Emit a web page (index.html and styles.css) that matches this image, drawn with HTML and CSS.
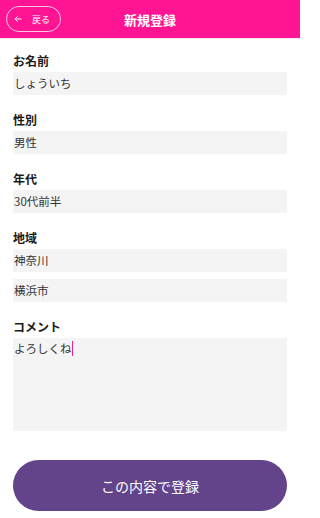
FILE: index.html
```html
<!DOCTYPE html>
<html lang="ja">
<head>
<meta charset="utf-8">
<link rel="stylesheet" href="styles.css">
</head>
<body>
<header class="header">
  <div class="header-left">
    <button class="back">
      <svg class="back-icon" viewBox="0 0 10 10" width="8" height="8">
        <path d="M9 5H1.5M4.5 1.8L1.3 5L4.5 8.2" fill="none" stroke="#fff" stroke-width="1.2" stroke-linecap="round" stroke-linejoin="round"/>
      </svg>
      <span class="back-text">戻る</span>
    </button>
  </div>
  <h1 class="title">新規登録</h1>
  <div class="header-right"></div>
</header>
<main class="form">
  <section class="field">
    <div class="label">お名前</div>
    <div class="input">しょういち</div>
  </section>
  <section class="field">
    <div class="label">性別</div>
    <div class="input">男性</div>
  </section>
  <section class="field">
    <div class="label">年代</div>
    <div class="input">30代前半</div>
  </section>
  <section class="field">
    <div class="label">地域</div>
    <div class="input">神奈川</div>
    <div class="input">横浜市</div>
  </section>
  <section class="field">
    <div class="label">コメント</div>
    <div class="textarea">よろしくね<span class="caret"></span></div>
  </section>
  <button class="submit">この内容で登録</button>
</main>
</body>
</html>
```
FILE: styles.css
```css
* { box-sizing: border-box; }
html, body { margin: 0; padding: 0; background: #fff; }
body {
  font-family: "Noto Sans CJK JP", "Noto Sans", sans-serif;
  color: #222;
  width: 300px;
}
.header {
  height: 39px;
  background: #ff1493;
  border-bottom: 1px solid #f6e6ee;
  display: grid;
  grid-template-columns: 1fr auto 1fr;
  align-items: center;
}
.header-left { padding-left: 6px; display: flex; }
.back {
  width: 55px;
  height: 26px;
  border: 1px solid rgba(255,255,255,0.75);
  border-radius: 13px;
  background: transparent;
  color: #fff;
  display: flex;
  align-items: center;
  padding: 0 0 0 7px;
  gap: 10px;
  font-family: inherit;
}
.back-icon { display: block; }
.back-text { font-size: 9px; line-height: 1; }
.title {
  margin: 0;
  font-size: 13px;
  font-weight: 700;
  color: #fff;
  line-height: 1;
}
.form {
  padding: 13px 13px 0 13px;
  display: flex;
  flex-direction: column;
  gap: 16px;
}
.field { display: flex; flex-direction: column; }
.label {
  font-size: 12px;
  font-weight: 700;
  line-height: 18px;
  height: 18px;
  margin-bottom: 2px;
  color: #1a1a1a;
}
.input {
  height: 23px;
  background: #f4f4f4;
  font-size: 11.5px;
  line-height: 23px;
  padding-left: 1px;
  color: #333;
}
.input + .input { margin-top: 7px; }
.textarea {
  height: 93px;
  background: #f4f4f4;
  font-size: 11.5px;
  line-height: 18px;
  padding: 1px 0 0 1px;
  color: #333;
}
.caret {
  display: inline-block;
  width: 1.5px;
  height: 15px;
  background: #e0288c;
  vertical-align: -3px;
}
.submit {
  margin-top: 13px;
  height: 51px;
  border: none;
  border-radius: 26px;
  background: #634389;
  color: #fff;
  font-family: inherit;
  font-size: 14px;
}
```
